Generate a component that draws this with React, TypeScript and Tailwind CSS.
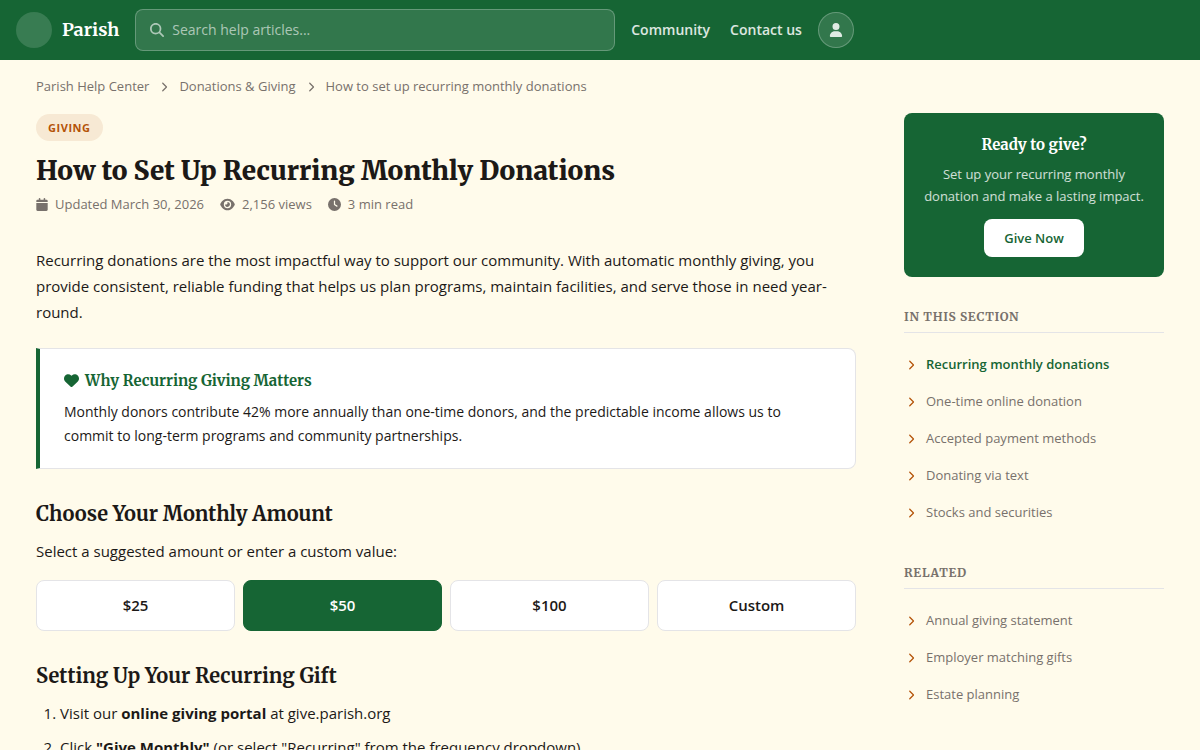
import { useState } from "react";
import {
  FaCalendar,
  FaChevronRight,
  FaClock,
  FaEye,
  FaHeart,
  FaMagnifyingGlass,
  FaUser,
} from "react-icons/fa6";

const serif = "font-['Merriweather','Noto_Serif','Liberation_Serif',serif]";
const amounts = ["$25", "$50", "$100", "Custom"];
const sectionLinks = [
  "Recurring monthly donations",
  "One-time online donation",
  "Accepted payment methods",
  "Donating via text",
  "Stocks and securities",
];
const relatedLinks = [
  "Annual giving statement",
  "Employer matching gifts",
  "Estate planning",
];

function Header() {
  return (
    <header className="flex h-[60px] items-center gap-4 bg-[#166534] px-4 text-white">
      <a href="#" className="flex items-center gap-2.5">
        <span className="size-9 rounded-full bg-white/15" />
        <span className={`${serif} text-lg font-bold`}>Parish</span>
      </a>
      <label className="flex h-[42px] w-full max-w-[480px] items-center gap-2 rounded-lg border border-white/25 bg-white/12 px-3.5">
        <FaMagnifyingGlass className="size-3.5 shrink-0 text-white/60" />
        <input
          type="search"
          aria-label="Search help articles"
          placeholder="Search help articles..."
          className="min-w-0 flex-1 bg-transparent text-sm outline-none placeholder:text-white/60"
        />
      </label>
      <nav className="flex shrink-0 items-center gap-5 text-sm font-semibold text-white/85">
        <a href="#">Community</a>
        <a href="#">Contact us</a>
      </nav>
      <button
        type="button"
        aria-label="Account"
        className="flex size-9 shrink-0 items-center justify-center rounded-full border border-white/25 bg-white/12 text-white/85"
      >
        <FaUser className="size-3.5" />
      </button>
    </header>
  );
}

function Breadcrumb() {
  return (
    <nav
      aria-label="Breadcrumb"
      className="flex items-center gap-[9px] py-4 text-[13px] leading-[21px] text-[#78716c]"
    >
      <a href="#" className="font-medium">Parish Help Center</a>
      <FaChevronRight className="h-2.5 w-3" />
      <a href="#" className="font-medium">Donations &amp; Giving</a>
      <FaChevronRight className="h-2.5 w-3" />
      <span>How to set up recurring monthly donations</span>
    </nav>
  );
}

function LinkSection({ title, links, active }: { title: string; links: string[]; active?: string }) {
  return (
    <section>
      <h3
        className={`${serif} mb-[13px] border-b border-[#e4e4e7] pb-2 text-xs leading-[15px] font-bold tracking-[0.06em] text-[#78716c] uppercase`}
      >
        {title}
      </h3>
      <ul>
        {links.map((link) => (
          <li key={link}>
            <a
              href="#"
              className={`flex items-center gap-2 py-2 text-[13px] leading-[21px] ${
                link === active ? "font-semibold text-[#166534]" : "text-[#78716c]"
              }`}
            >
              <FaChevronRight className="h-2.5 w-3.5 text-[#b45309]" />
              {link}
            </a>
          </li>
        ))}
      </ul>
    </section>
  );
}

export default function App() {
  const [amount, setAmount] = useState("$50");
  return (
    <div className="min-h-screen bg-[#fffbeb] font-['Open_Sans','Noto_Sans',sans-serif] text-[#1c1917]">
      <Header />
      <div className="mx-auto max-w-[1200px] px-9">
        <Breadcrumb />
        <div className="grid grid-cols-[minmax(0,1fr)_260px] items-start gap-12">
          <main className="pt-px pb-12 text-[15px] leading-[26px]">
            <span className="mb-[11px] block w-fit rounded-full bg-[#b45309]/10 px-3 py-1 text-[11px] leading-[19px] font-bold tracking-wider text-[#b45309] uppercase">
              Giving
            </span>
            <h1 className={`${serif} mb-0.5 text-[26px] leading-[38px] font-black`}>
              How to Set Up Recurring Monthly Donations
            </h1>
            <div className="mb-[31px] flex items-center gap-4 text-[13px] leading-6 text-[#78716c]">
              <span className="flex items-center gap-[7px]">
                <FaCalendar className="h-[13px] w-3" />
                Updated March 30, 2026
              </span>
              <span className="flex items-center gap-[7px]">
                <FaEye className="h-[13px] w-[15px]" />
                2,156 views
              </span>
              <span className="flex items-center gap-[7px]">
                <FaClock className="size-[13px]" />3 min read
              </span>
            </div>
            <p className="mb-[23px]">
              Recurring donations are the most impactful way to support our community. With automatic
              monthly giving, you provide consistent, reliable funding that helps us plan programs,
              maintain facilities, and serve those in need year-round.
            </p>
            <section className="mb-8 rounded-r-lg border border-l-4 border-[#e4e4e7] border-l-[#166534] bg-white px-6 py-5">
              <h3
                className={`${serif} mb-2 flex items-center gap-1.5 text-[15px] leading-[23px] font-bold text-[#166534]`}
              >
                <FaHeart className="size-[15px]" />
                Why Recurring Giving Matters
              </h3>
              <p className="text-sm leading-6">
                Monthly donors contribute 42% more annually than one-time donors, and the predictable
                income allows us to commit to long-term programs and community partnerships.
              </p>
            </section>
            <h2 className={`${serif} mb-[11px] text-xl leading-[26px] font-bold`}>Choose Your Monthly Amount</h2>
            <p className="mb-4">Select a suggested amount or enter a custom value:</p>
            <div className="mb-8 grid grid-cols-4 gap-2">
              {amounts.map((item) => (
                <button
                  key={item}
                  type="button"
                  aria-pressed={item === amount}
                  onClick={() => setAmount(item)}
                  className={`rounded-lg border py-3 text-[15px] leading-[25px] font-semibold ${
                    item === amount
                      ? "border-[#166534] bg-[#166534] text-white"
                      : "border-[#e4e4e7] bg-white"
                  }`}
                >
                  {item}
                </button>
              ))}
            </div>
            <h2 className={`${serif} mb-[11px] text-xl leading-[26px] font-bold`}>Setting Up Your Recurring Gift</h2>
            <ol className="flex list-decimal flex-col gap-2 pl-6">
              <li>
                Visit our <strong>online giving portal</strong> at give.parish.org
              </li>
              <li>
                Click <strong>"Give Monthly"</strong> (or select "Recurring" from the frequency dropdown)
              </li>
            </ol>
          </main>
          <aside>
            <section className="mb-8 flex flex-col items-center rounded-lg bg-[#166534] p-5 text-center text-white">
              <h3 className={`${serif} mb-1.5 text-[15px] leading-6 font-bold`}>Ready to give?</h3>
              <p className="mb-3 text-[13px] leading-[22px] text-white/80">
                Set up your recurring monthly donation and make a lasting impact.
              </p>
              <a
                href="#"
                className="rounded-lg bg-white px-5 py-2 text-[13px] leading-[22px] font-semibold text-[#166534]"
              >
                Give Now
              </a>
            </section>
            <div className="flex flex-col gap-[34px]">
              <LinkSection title="In this section" links={sectionLinks} active={sectionLinks[0]} />
              <LinkSection title="Related" links={relatedLinks} />
            </div>
          </aside>
        </div>
      </div>
    </div>
  );
}
